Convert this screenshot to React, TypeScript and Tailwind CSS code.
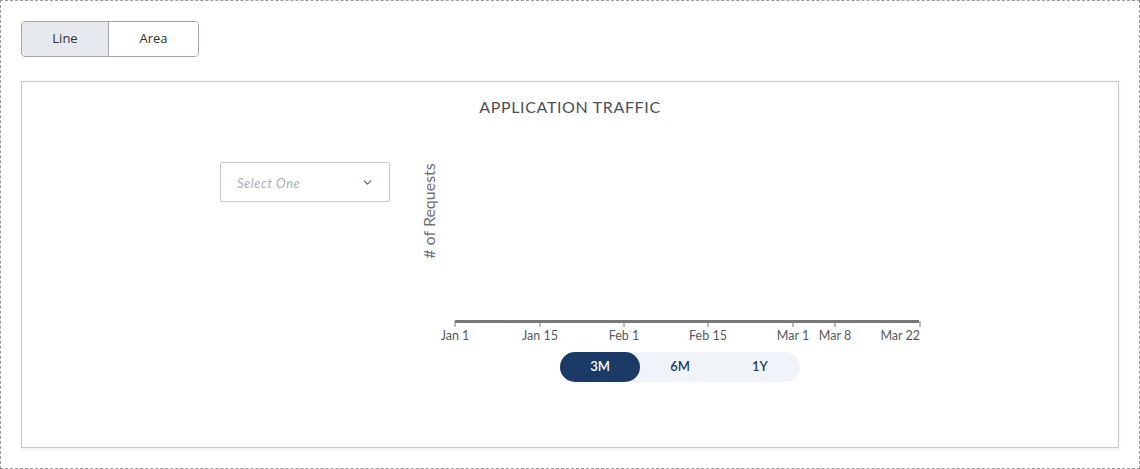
import { useState } from 'react';
import { ChevronDown } from 'lucide-react';

const ticks = [
  { x: 45, label: 'Jan 1', anchor: 'middle' },
  { x: 130, label: 'Jan 15', anchor: 'middle' },
  { x: 214, label: 'Feb 1', anchor: 'middle' },
  { x: 298, label: 'Feb 15', anchor: 'middle' },
  { x: 383, label: 'Mar 1', anchor: 'middle' },
  { x: 425, label: 'Mar 8', anchor: 'middle' },
  { x: 510, label: 'Mar 22', anchor: 'end' },
];

const ranges = ['3M', '6M', '1Y'];

export default function App() {
  const [mode, setMode] = useState<'line' | 'area'>('line');
  const [range, setRange] = useState('3M');

  return (
    <div className="w-[1140px] h-[469px] bg-white border border-dashed border-[#9a9a9a] p-5 font-['Lato',sans-serif]">
      {/* Chart type toggle */}
      <div className="flex w-[178px] h-9 rounded border border-[#a3a7ad] overflow-hidden font-['Open_Sans',sans-serif] text-[13px] text-[#333]">
        <button
          onClick={() => setMode('line')}
          className={`w-[87px] border-r border-[#a3a7ad] ${mode === 'line' ? 'bg-[#e6e9ed]' : 'bg-white'}`}
        >
          Line
        </button>
        <button
          onClick={() => setMode('area')}
          className={`flex-1 ${mode === 'area' ? 'bg-[#e6e9ed]' : 'bg-white'}`}
        >
          Area
        </button>
      </div>

      {/* Chart card */}
      <div className="mt-6 h-[367px] border border-[#c9c9c9] shadow-[0_1px_3px_rgba(0,0,0,0.08)]">
        <h2 className="pt-[13px] text-center text-base leading-6 text-[#4a4f57] tracking-[0.04em]">
          APPLICATION TRAFFIC
        </h2>

        <div className="flex mt-[21px]">
          <div className="ml-[198px] mt-[22px] w-[170px] h-10 border border-[#c4c8cf] rounded-[2px] flex items-center justify-between pl-4 pr-[15px] pt-1">
            <span className="italic text-[13px] tracking-[0.04em] text-[#a9b0bb]">Select One</span>
            <ChevronDown size={13} strokeWidth={2} className="text-[#56647a] -mt-1" />
          </div>

          <svg width="540" height="205" className="ml-5 block overflow-visible" fontFamily="Lato, sans-serif">
            <text
              transform="translate(25 71) rotate(-90)"
              textAnchor="middle"
              fontSize="16"
              fill="#6b6f76"
            >
              # of Requests
            </text>
            <line x1="45" y1="181.5" x2="509" y2="181.5" stroke="#777" strokeWidth="3" />
            {ticks.map((t) => (
              <g key={t.label}>
                <line x1={t.x} y1="181" x2={t.x} y2="187" stroke="#777" strokeWidth="1" />
                <text x={t.x} y="200" textAnchor={t.anchor} fontSize="12.5" fill="#555a60">
                  {t.label}
                </text>
              </g>
            ))}
          </svg>
        </div>

        {/* Range selector */}
        <div className="ml-[538px] mt-[7px] flex w-[240px] h-[30px] rounded-full bg-[#f0f3f7] text-[13px] font-semibold">
          {ranges.map((r) => (
            <button
              key={r}
              onClick={() => setRange(r)}
              className={`w-20 rounded-full ${range === r ? 'bg-[#1b3a66] text-white' : 'text-[#1b3a66]'}`}
            >
              {r}
            </button>
          ))}
        </div>
      </div>
    </div>
  );
}
